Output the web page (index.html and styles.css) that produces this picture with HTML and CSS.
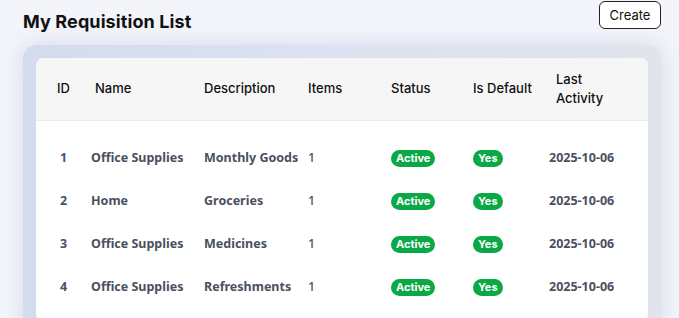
FILE: index.html
```html
<!DOCTYPE html>
<html lang="en">

<head>
    <meta charset="UTF-8">
    <meta name="viewport" content="width=device-width, initial-scale=1">
    <title>My Requisition List</title>
    <link rel="stylesheet" href="styles.css">
</head>

<body>

    <!-- Topo -->
    <div class="page-header">
        <h1 class="page-title">My Requisition List</h1>
        <button class="create-button">Create</button>
    </div>

    <!-- Lista -->
    <div class="panel">
        <div class="card">
            <table class="req-table">
                <colgroup>
                    <col class="w-id">
                    <col class="w-name">
                    <col class="w-desc">
                    <col class="w-items">
                    <col class="w-status">
                    <col class="w-default">
                    <col class="w-date">
                </colgroup>
                <thead>
                    <tr>
                        <th class="c-id">ID</th>
                        <th>Name</th>
                        <th>Description</th>
                        <th>Items</th>
                        <th>Status</th>
                        <th>Is Default</th>
                        <th class="c-date">Last<br>Activity</th>
                    </tr>
                </thead>
                <tbody>
                    <tr class="spacer"><td colspan="7"></td></tr>
                    <tr>
                        <td class="c-id">1</td>
                        <td class="c-name">Office Supplies</td>
                        <td>Monthly Goods</td>
                        <td class="c-items">1</td>
                        <td><span class="badge">Active</span></td>
                        <td><span class="badge">Yes</span></td>
                        <td class="c-date">2025-10-06</td>
                    </tr>
                    <tr>
                        <td class="c-id">2</td>
                        <td class="c-name">Home</td>
                        <td>Groceries</td>
                        <td class="c-items">1</td>
                        <td><span class="badge">Active</span></td>
                        <td><span class="badge">Yes</span></td>
                        <td class="c-date">2025-10-06</td>
                    </tr>
                    <tr>
                        <td class="c-id">3</td>
                        <td class="c-name">Office Supplies</td>
                        <td>Medicines</td>
                        <td class="c-items">1</td>
                        <td><span class="badge">Active</span></td>
                        <td><span class="badge">Yes</span></td>
                        <td class="c-date">2025-10-06</td>
                    </tr>
                    <tr>
                        <td class="c-id">4</td>
                        <td class="c-name">Office Supplies</td>
                        <td>Refreshments</td>
                        <td class="c-items">1</td>
                        <td><span class="badge">Active</span></td>
                        <td><span class="badge">Yes</span></td>
                        <td class="c-date">2025-10-06</td>
                    </tr>
                </tbody>
            </table>
        </div>
    </div>

</body>

</html>
```

FILE: styles.css
```css
* {
    margin: 0;
    padding: 0;
    box-sizing: border-box;
}

body {
    font-family: 'Inter', 'Noto Sans', sans-serif;
    background: #f4f5fb;
    color: #111111;
    padding: 1px 18px 0 23px;
    overflow: hidden;
}

.page-header {
    display: flex;
    justify-content: space-between;
    align-items: flex-start;
}

.page-title {
    font-size: 18px;
    font-weight: 700;
    line-height: 24px;
    margin-top: 9px;
    letter-spacing: 0.1px;
}

.create-button {
    font-family: 'Inter', sans-serif;
    font-size: 13px;
    color: #111111;
    background: #ffffff;
    border: 1px solid #222222;
    border-radius: 6px;
    width: 62px;
    height: 28px;
    cursor: pointer;
}

.panel {
    margin-top: 11px;
    padding: 13px;
    border-radius: 14px;
    background: linear-gradient(to right, #d3dcee 0%, #dce2ef 50%, #e1e4eb 100%);
    box-shadow: 0 0 22px rgba(150, 165, 200, 0.35);
    height: 290px;
}

.card {
    background: #ffffff;
    border-radius: 8px;
    overflow: hidden;
    height: 100%;
}

.req-table {
    width: 100%;
    border-collapse: collapse;
    table-layout: fixed;
}

.w-id { width: 55px; }
.w-name { width: 109px; }
.w-desc { width: 104px; }
.w-items { width: 83px; }
.w-status { width: 82px; }
.w-default { width: 80px; }
.w-date { width: 99px; }

th {
    background: #f6f6f6;
    border-bottom: 1px solid #ebebeb;
    height: 62px;
    padding: 0 4px;
    text-align: left;
    font-size: 13px;
    font-weight: 500;
    line-height: 19px;
    color: #111111;
}

th.c-date {
    padding-left: 7px;
}

td {
    height: 43px;
    padding: 0 4px;
    font-family: 'Noto Sans', sans-serif;
    font-size: 12.5px;
    font-weight: 700;
    color: #4a505e;
    white-space: nowrap;
}

.spacer td {
    height: 16px;
}

.c-id {
    text-align: center;
}

td.c-name {
    padding-left: 0;
}

td.c-items {
    font-weight: 500;
}

td.c-date {
    padding-left: 0;
}

.badge {
    display: inline-block;
    background: #0aa846;
    color: #ffffff;
    font-family: 'Inter', sans-serif;
    font-size: 11px;
    font-weight: 700;
    line-height: 17px;
    padding: 0 5px;
    border-radius: 9px;
}
```
